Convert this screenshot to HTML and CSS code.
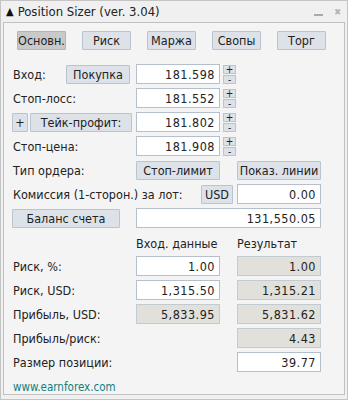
FILE: index.html
```html
<!DOCTYPE html>
<html lang="ru">
<head>
    <meta charset="UTF-8">
    <title>Position Sizer</title>
    <link rel="stylesheet" href="styles.css">
</head>
<body>
    <div class="window">
        <div class="titlebar">
            <span class="arrow">&#9650;</span>
            <span class="title">Position Sizer (ver. 3.04)</span>
            <span class="win-min"></span>
            <span class="win-close">&#10006;</span>
        </div>
        <div class="panel">
            <div class="tabs">
                <div class="btn tab active">Основн.</div>
                <div class="btn tab">Риск</div>
                <div class="btn tab">Маржа</div>
                <div class="btn tab">Свопы</div>
                <div class="btn tab">Торг</div>
            </div>

            <div class="row">
                <div class="label short">Вход:</div>
                <div class="btn dir">Покупка</div>
                <div class="field">181.598</div>
                <div class="spin"><div>+</div><div>-</div></div>
            </div>
            <div class="row">
                <div class="label">Стоп-лосс:</div>
                <div class="field">181.552</div>
                <div class="spin"><div>+</div><div>-</div></div>
            </div>
            <div class="row">
                <div class="btn plus">+</div>
                <div class="btn tp">Тейк-профит:</div>
                <div class="field">181.802</div>
                <div class="spin"><div>+</div><div>-</div></div>
            </div>
            <div class="row">
                <div class="label">Стоп-цена:</div>
                <div class="field">181.908</div>
                <div class="spin"><div>+</div><div>-</div></div>
            </div>
            <div class="row">
                <div class="label">Тип ордера:</div>
                <div class="btn col2">Стоп-лимит</div>
                <div class="gap"></div>
                <div class="btn col3">Показ. линии</div>
            </div>
            <div class="row">
                <div class="label comm">Комиссия (1-сторон.) за лот:</div>
                <div class="btn usd">USD</div>
                <div class="field col3">0.00</div>
            </div>
            <div class="row">
                <div class="btn balance">Баланс счета</div>
                <div class="field wide">131,550.05</div>
            </div>
            <div class="row heads">
                <div class="label"></div>
                <div class="head col2">Вход. данные</div>
                <div class="gap"></div>
                <div class="head col3">Результат</div>
            </div>
            <div class="row">
                <div class="label">Риск, %:</div>
                <div class="field">1.00</div>
                <div class="gap"></div>
                <div class="field col3 ro">1.00</div>
            </div>
            <div class="row">
                <div class="label">Риск, USD:</div>
                <div class="field">1,315.50</div>
                <div class="gap"></div>
                <div class="field col3 ro">1,315.21</div>
            </div>
            <div class="row">
                <div class="label">Прибыль, USD:</div>
                <div class="field ro">5,833.95</div>
                <div class="gap"></div>
                <div class="field col3 ro">5,831.62</div>
            </div>
            <div class="row">
                <div class="label">Прибыль/риск:</div>
                <div class="blank"></div>
                <div class="gap"></div>
                <div class="field col3 ro">4.43</div>
            </div>
            <div class="row">
                <div class="label">Размер позиции:</div>
                <div class="blank"></div>
                <div class="gap"></div>
                <div class="field col3">39.77</div>
            </div>
            <div class="footer">www.earnforex.com</div>
        </div>
    </div>
</body>
</html>
```

FILE: styles.css
```css
body {
    margin: 0;
    padding: 0;
    font-family: "DejaVu Sans Condensed", "DejaVu Sans", sans-serif;
    font-size: 12.5px;
    color: #222;
    background-color: #f0f0f0;
}
.window {
    width: 348px;
    height: 400px;
    box-sizing: border-box;
    border: 1px solid #c4c4c4;
    background-color: #f0f0f0;
}
.titlebar {
    height: 21px;
    display: flex;
    align-items: center;
    padding-left: 5px;
}
.arrow {
    font-size: 11px;
    margin-right: 4px;
    color: #111;
}
.title {
    font-size: 13px;
    color: #222;
    flex: 1;
}
.win-min {
    width: 9px;
    height: 2px;
    background-color: #aaa;
    margin-top: 6px;
    margin-right: 11px;
}
.win-close {
    font-size: 9px;
    color: #b4b4b4;
    margin-right: 6px;
}
.panel {
    margin: 0 2px;
    height: 373px;
    box-sizing: border-box;
    border: 1px solid #c0c0c0;
    background-color: #f4f4f4;
    padding: 8px 0 0 8px;
}
.tabs {
    display: flex;
    gap: 16px;
    padding-left: 5px;
    margin-bottom: 14px;
}
.btn {
    box-sizing: border-box;
    height: 19px;
    display: flex;
    align-items: center;
    justify-content: center;
    background-color: #dde2e9;
    border: 1px solid #b8c4d0;
    border-radius: 1px;
    color: #222;
    white-space: nowrap;
}
.tab {
    width: 49px;
}
.tab.active {
    background-color: #c9c9c9;
    border-color: #b4b4b4;
}
.row {
    display: flex;
    align-items: center;
    height: 20px;
    margin-bottom: 4px;
}
.label {
    width: 124px;
    padding-left: 1px;
    box-sizing: border-box;
    white-space: nowrap;
}
.label.short {
    width: 54px;
}
.label.comm {
    width: 189px;
}
.dir {
    width: 64px;
    margin-right: 6px;
}
.plus {
    width: 16px;
    margin-right: 2px;
}
.tp {
    width: 102px;
    margin-right: 4px;
}
.field {
    box-sizing: border-box;
    width: 84px;
    height: 20px;
    background-color: #fff;
    border: 1px solid #b4c0cc;
    text-align: right;
    padding: 2px 4px 0 0;
    letter-spacing: 0.5px;
}
.field.ro {
    background-color: #e1e0da;
    border-color: #c2cad2;
}
.blank {
    width: 84px;
}
.gap {
    width: 17px;
}
.col2 {
    width: 84px;
}
.col3 {
    width: 84px;
}
.usd {
    width: 32px;
    margin-right: 4px;
}
.balance {
    width: 108px;
    margin-right: 16px;
}
.field.wide {
    width: 185px;
}
.heads .head {
    padding-top: 2px;
    white-space: nowrap;
}
.spin {
    display: flex;
    flex-direction: column;
    margin-left: 3px;
    gap: 1px;
}
.spin div {
    box-sizing: border-box;
    width: 13px;
    height: 9px;
    background-color: #dde2e9;
    border: 1px solid #b8c4d0;
    font-size: 10px;
    line-height: 7px;
    text-align: center;
}
.footer {
    font-size: 11.5px;
    color: #0f7f7f;
    padding-left: 1px;
    margin-top: 8px;
}
```
